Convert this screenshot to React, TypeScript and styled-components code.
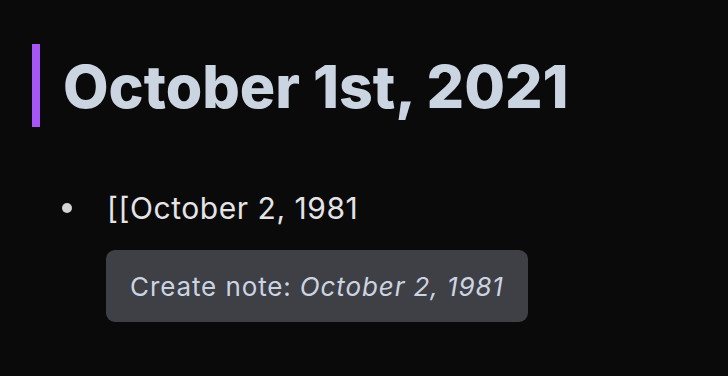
import React from 'react'
import styled, { createGlobalStyle } from 'styled-components'

const GlobalStyle = createGlobalStyle`
    html, body {
        margin: 0;
        padding: 0;
        background: #0a0a0a;
    }
    body {
        font-family: Inter, "Noto Sans", sans-serif;
    }
`

const Page = styled.div`
    min-height: 376px;
    padding: 44px 0 0 32px;
    box-sizing: border-box;
    background: #0a0a0a;
`

const Heading = styled.h1`
    margin: 0;
    border-left: 8px solid #a855f7;
    padding-left: 23px;
    height: 83px;
    font-size: 59px;
    line-height: 85px;
    font-weight: 800;
    color: #cbd5e1;
`

const List = styled.ul`
    list-style: none;
    margin: 62px 0 0;
    padding: 0 0 0 30px;
`

const Item = styled.li`
    display: flex;
    flex-direction: column;
    align-items: flex-start;
`

const Line = styled.div`
    display: flex;
    align-items: center;
    gap: 35px;
    font-size: 30px;
    line-height: 38px;
    letter-spacing: 0.55px;
    color: #e4e4e7;
`

const Bullet = styled.span`
    width: 10px;
    height: 10px;
    border-radius: 50%;
    background: #d4d4d8;
`

const Popup = styled.div`
    margin: 23px 0 0 44px;
    width: 422px;
    height: 72px;
    box-sizing: border-box;
    padding: 0 24px;
    display: flex;
    align-items: center;
    border-radius: 9px;
    background: #3f3f46;
    color: #cbd5e1;
    font-size: 26px;
    letter-spacing: 0.9px;

    em {
        font-style: italic;
        margin-left: 8px;
    }
`

export default function App() {
    return (
        <Page>
            <GlobalStyle />
            <Heading>October 1st, 2021</Heading>
            <List>
                <Item>
                    <Line>
                        <Bullet />
                        <span>[[October 2, 1981</span>
                    </Line>
                    <Popup>
                        Create note:<em>October 2, 1981</em>
                    </Popup>
                </Item>
            </List>
        </Page>
    )
}
